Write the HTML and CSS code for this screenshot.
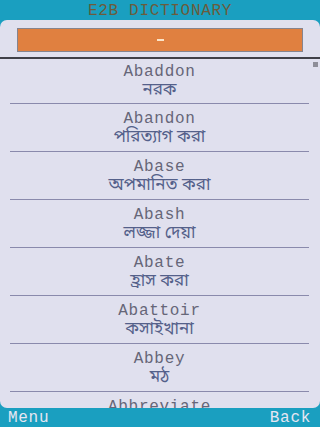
FILE: index.html
```html
<!DOCTYPE html>
<html>
<head>
<meta charset="utf-8">
<link rel="stylesheet" href="styles.css">
</head>
<body>
<div class="screen">
  <div class="title">E2B DICTIONARY</div>
  <div class="panel">
    <div class="search">
      <div class="input"><span class="cursor"></span></div>
    </div>
    <div class="rule"></div>
    <div class="list">
      <div class="scroll"></div>
      <div class="item first"><div class="en">Abaddon</div><div class="bn">নরক</div></div>
      <div class="item"><div class="en">Abandon</div><div class="bn">পরিত্যাগ করা</div></div>
      <div class="item"><div class="en">Abase</div><div class="bn">অপমানিত করা</div></div>
      <div class="item"><div class="en">Abash</div><div class="bn">লজ্জা দেয়া</div></div>
      <div class="item"><div class="en">Abate</div><div class="bn">হ্রাস করা</div></div>
      <div class="item"><div class="en">Abattoir</div><div class="bn">কসাইখানা</div></div>
      <div class="item"><div class="en">Abbey</div><div class="bn">মঠ</div></div>
      <div class="item"><div class="en">Abbreviate</div><div class="bn">সংক্ষেপ করা</div></div>
    </div>
  </div>
  <div class="footer"><span>Menu</span><span>Back</span></div>
</div>
</body>
</html>
```
FILE: styles.css
```css
html, body {
  margin: 0;
  padding: 0;
  background: #1a9fc0;
}
.screen {
  width: 320px;
  height: 427px;
  display: flex;
  flex-direction: column;
  background: #1a9fc0;
  font-family: "Liberation Mono", "DejaVu Sans Mono", monospace;
  overflow: hidden;
}
.title {
  height: 20px;
  line-height: 22px;
  text-align: center;
  font-size: 16px;
  letter-spacing: 0.7px;
  color: #6b5c3c;
}
.panel {
  height: 388px;
  background: #e0e0ee;
  border-radius: 7px;
  overflow: hidden;
  display: flex;
  flex-direction: column;
}
.search {
  padding: 8px 17px 5px 17px;
}
.input {
  height: 22px;
  background: #e08040;
  border: 1px solid #86848e;
  display: flex;
  align-items: center;
  justify-content: center;
}
.cursor {
  display: block;
  width: 7px;
  height: 2px;
  background: #fbe4c8;
}
.rule {
  height: 2px;
  background: #404048;
}
.list {
  position: relative;
  flex: 1;
  overflow: hidden;
}
.scroll {
  position: absolute;
  right: 2px;
  top: 3px;
  width: 5px;
  height: 5px;
  background: #8e8e98;
}
.item {
  margin: 0 11px 0 10px;
  height: 48px;
  box-sizing: border-box;
  padding-top: 6px;
  border-bottom: 1px solid #8a8aac;
  display: flex;
  flex-direction: column;
  align-items: center;
}
.item.first {
  height: 45px;
  padding-top: 4px;
}
.en {
  font-size: 16px;
  letter-spacing: 0.7px;
  color: #666678;
  height: 18px;
  line-height: 18px;
}
.bn {
  font-family: "Noto Sans Bengali", "Lohit Bengali", "Noto Sans", sans-serif;
  font-size: 17px;
  color: #54608a;
  line-height: 18px;
  height: 18px;
  margin-top: 1px;
}
.footer {
  flex: 1;
  display: flex;
  justify-content: space-between;
  align-items: center;
  padding: 0 9px 0 8px;
  font-size: 16px;
  letter-spacing: 0.7px;
  color: #e6e6f2;
}
```
